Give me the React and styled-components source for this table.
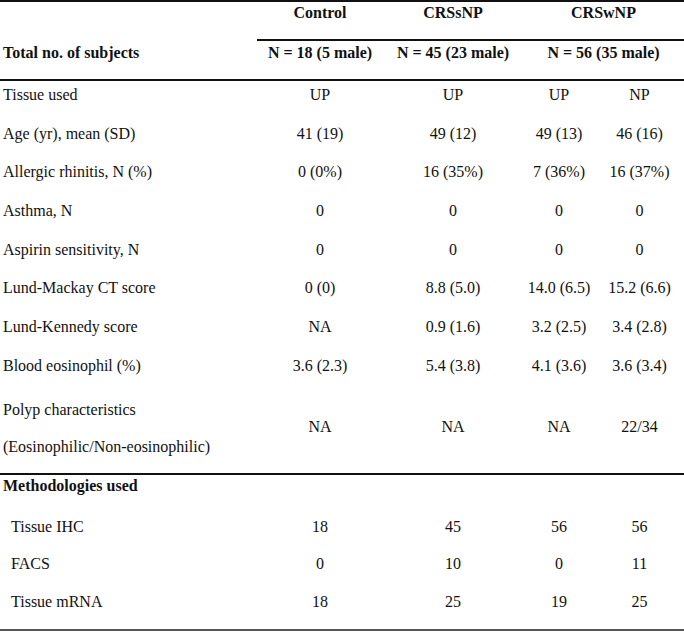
import React from 'react';
import styled, { createGlobalStyle } from 'styled-components';

const GlobalStyle = createGlobalStyle`
  html, body {
    margin: 0;
    padding: 0;
    background: #fff;
  }
  body {
    font-family: "Liberation Serif", "Times New Roman", serif;
    font-size: 16px;
    color: #111;
  }
`;

const Table = styled.div`
  width: 684px;
  border-top: 2px solid #111;
`;

const Row = styled.div`
  display: grid;
  grid-template-columns: 257px 126px 140px 72px 89px;
  align-items: start;
  box-sizing: border-box;
  height: ${(p) => p.$h}px;
  padding-top: ${(p) => p.$pt ?? 4}px;
  border-bottom: ${(p) => (p.$rule ? `2px solid ${p.$rule}` : 'none')};
`;

const Label = styled.div`
  padding-left: ${(p) => (p.$indent ? 11 : 3)}px;
  font-weight: ${(p) => (p.$bold ? 700 : 400)};
  line-height: ${(p) => p.$lh ?? 20}px;
  white-space: nowrap;
`;

const Cell = styled.div`
  text-align: center;
  line-height: ${(p) => p.$lh ?? 20}px;
  white-space: nowrap;
  grid-column: ${(p) => (p.$span ? `span ${p.$span}` : 'auto')};
`;

const HeadCell = styled(Cell)`
  font-weight: 700;
  align-self: stretch;
  border-bottom: ${(p) => (p.$ruled ? '2px solid #111' : 'none')};
`;

const rows = [
  ['Tissue used', 'UP', 'UP', 'UP', 'NP'],
  ['Age (yr), mean (SD)', '41 (19)', '49 (12)', '49 (13)', '46 (16)'],
  ['Allergic rhinitis, N (%)', '0 (0%)', '16 (35%)', '7 (36%)', '16 (37%)'],
  ['Asthma, N', '0', '0', '0', '0'],
  ['Aspirin sensitivity, N', '0', '0', '0', '0'],
  ['Lund-Mackay CT score', '0 (0)', '8.8 (5.0)', '14.0 (6.5)', '15.2 (6.6)'],
  ['Lund-Kennedy score', 'NA', '0.9 (1.6)', '3.2 (2.5)', '3.4 (2.8)'],
  ['Blood eosinophil (%)', '3.6 (2.3)', '5.4 (3.8)', '4.1 (3.6)', '3.6 (3.4)'],
];

const methods = [
  ['Tissue IHC', '18', '45', '56', '56'],
  ['FACS', '0', '10', '0', '11'],
  ['Tissue mRNA', '18', '25', '19', '25'],
];

export default function App() {
  return (
    <>
      <GlobalStyle />
      <Table>
        <Row $h={39} $pt={1}>
          <Label />
          <HeadCell $ruled>Control</HeadCell>
          <HeadCell $ruled>CRSsNP</HeadCell>
          <HeadCell $ruled $span={2}>CRSwNP</HeadCell>
        </Row>
        <Row $h={40} $pt={2} $rule="#111">
          <Label $bold>Total no. of subjects</Label>
          <HeadCell>N = 18 (5 male)</HeadCell>
          <HeadCell>N = 45 (23 male)</HeadCell>
          <HeadCell $span={2}>N = 56 (35 male)</HeadCell>
        </Row>

        {rows.map((r) => (
          <Row key={r[0]} $h={38.7}>
            <Label>{r[0]}</Label>
            {r.slice(1).map((v, i) => (
              <Cell key={i}>{v}</Cell>
            ))}
          </Row>
        ))}

        <Row $h={84.4} $pt={0} $rule="#111">
          <Label $lh={37}>
            Polyp characteristics
            <br />
            (Eosinophilic/Non-eosinophilic)
          </Label>
          <Cell $lh={72}>NA</Cell>
          <Cell $lh={72}>NA</Cell>
          <Cell $lh={72}>NA</Cell>
          <Cell $lh={72}>22/34</Cell>
        </Row>

        <Row $h={38} $pt={1}>
          <Label $bold>Methodologies used</Label>
        </Row>

        {methods.map((r, idx) => (
          <Row
            key={r[0]}
            $h={idx === methods.length - 1 ? 43 : 37.5}
            $rule={idx === methods.length - 1 ? '#555' : null}
          >
            <Label $indent>{r[0]}</Label>
            {r.slice(1).map((v, i) => (
              <Cell key={i}>{v}</Cell>
            ))}
          </Row>
        ))}
      </Table>
    </>
  );
}
